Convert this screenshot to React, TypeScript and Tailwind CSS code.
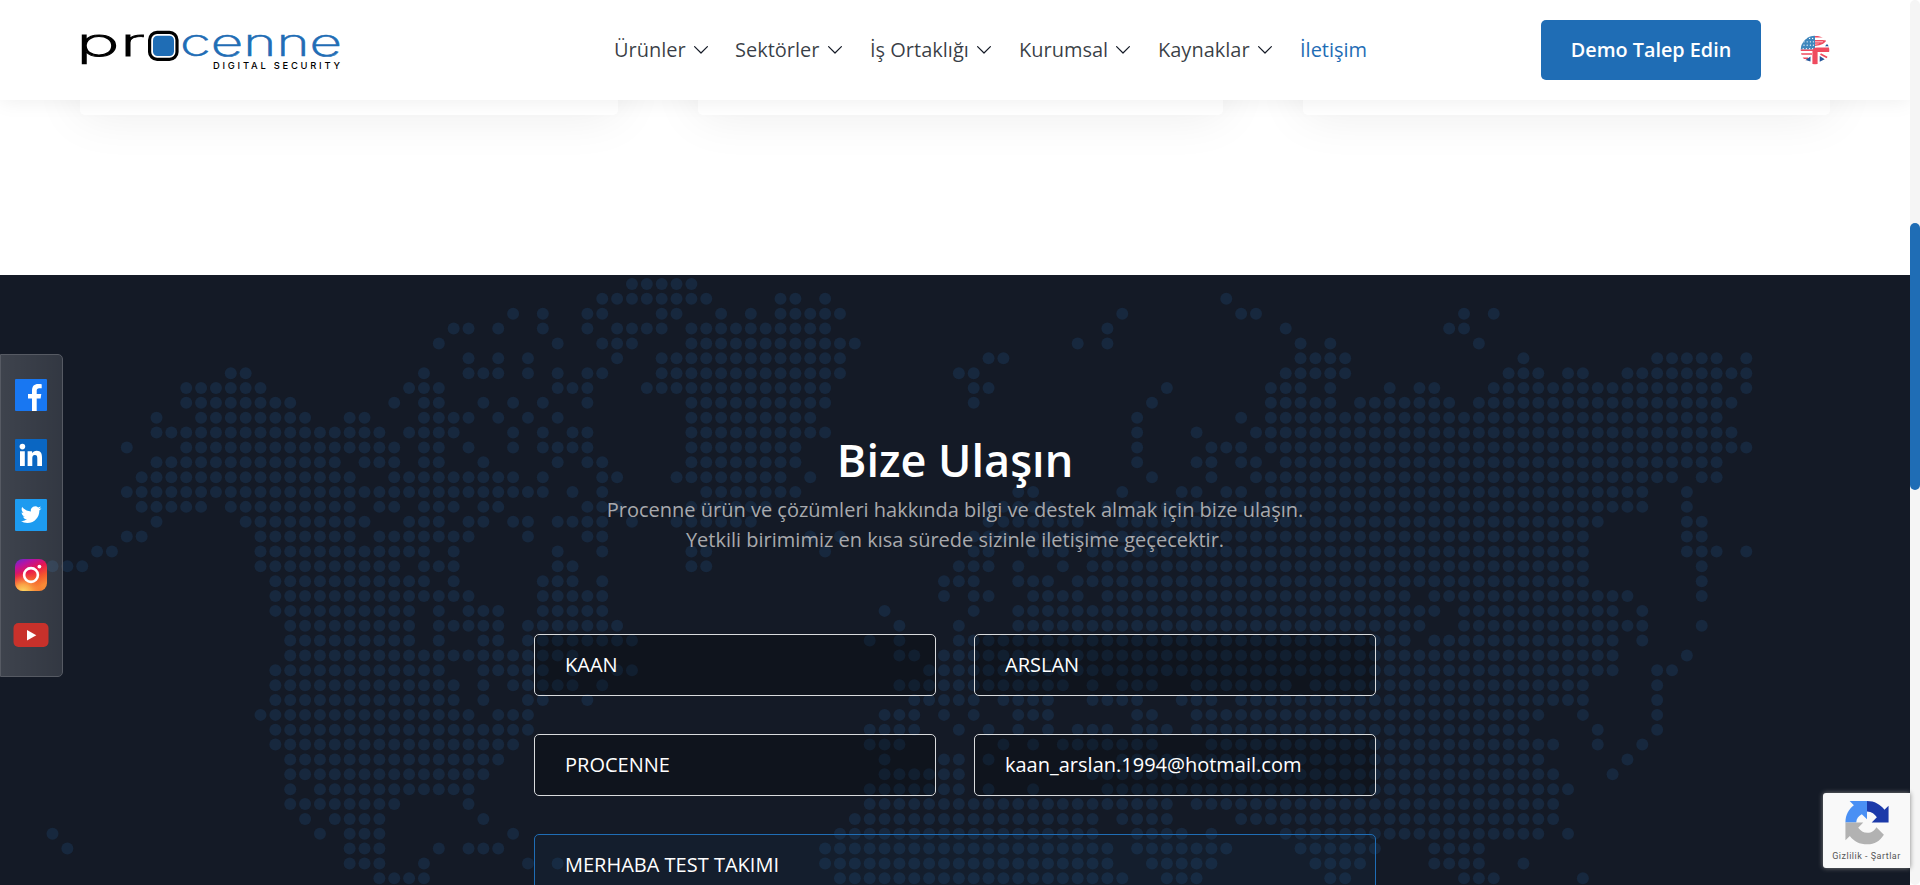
import React from "react";

type Range = [number, number?];

const COLUMN_PITCH = 14.858;
const DOT_RADIUS = 6;

const MAP_ROWS: Range[][] = [
  [[39, 43]],
  [[37, 44], [49, 50], [52], [79]],
  [[31], [33], [36, 37], [41, 42], [45], [47], [49, 53], [72], [80, 81], [95], [97]],
  [[27, 28], [30], [33], [36], [38, 41], [43, 52], [71], [83], [94, 95]],
  [[26], [34], [37, 39], [43, 54], [69], [71], [84], [86], [96]],
  [[28], [30], [32], [38], [41, 53], [63, 64], [84, 87], [99], [108, 112], [114]],
  [[12, 13], [25], [28, 30], [32], [34], [36, 37], [41, 53], [61, 62], [83, 87], [98, 100], [102, 103], [106, 114]],
  [[9, 14], [24, 26], [34, 36], [40, 52], [62, 63], [75], [82, 84], [86], [90], [92, 93], [97, 112], [114]],
  [[9, 16], [23], [25, 26], [29], [31], [33], [36], [43, 52], [62], [74], [82, 86], [88, 94], [96, 113]],
  [[7], [10, 17], [20, 21], [25, 28], [30], [32], [34], [43, 51], [73], [80], [82, 112]],
  [[7, 22], [24, 27], [31], [33], [35, 36], [43, 52], [73], [77], [81, 113]],
  [[5], [9, 23], [25, 26], [28], [31], [33, 36], [43, 50], [73], [78, 80], [82, 114]],
  [[7, 19], [21, 23], [25, 26], [29], [34], [36, 37], [43, 50], [73], [77, 78], [80, 81], [83, 112]],
  [[6, 20], [23, 31], [33], [37, 38], [42, 49], [51], [74], [78], [81, 109], [111, 112]],
  [[5, 33], [35], [37], [44, 50], [65, 66], [72], [76, 77], [79, 80], [82, 107], [110]],
  [[6, 10], [12, 20], [22, 23], [25, 27], [29, 30], [36, 38], [43, 48], [63, 67], [71], [73, 107], [110]],
  [[7], [13, 21], [24, 26], [28, 29], [31, 32], [34, 37], [39], [42, 47], [63, 69], [72, 104], [110, 111]],
  [[5, 6], [14, 20], [22, 28], [32], [36, 37], [51], [53], [62, 64], [66, 103], [110, 111]],
  [[3, 4], [14, 25], [27], [34], [37], [43, 44], [52], [62, 63], [66, 68], [70, 103], [110, 112], [114]],
  [[0, 2], [14, 23], [25, 27], [34, 35], [43, 44], [61, 63], [65], [68], [70, 103], [111]],
  [[15, 25], [27], [33, 35], [37], [60, 62], [65, 67], [69, 103], [111]],
  [[15, 28], [33, 37], [60], [62, 63], [66, 69], [71, 91], [93, 106], [111]],
  [[15, 24], [26], [28, 30], [33, 37], [56], [62], [65, 93], [95, 105], [107]],
  [[16, 24], [26, 30], [32, 38], [57], [61], [65, 92], [95, 107], [111]],
  [[16, 24], [26], [29, 30], [32, 39], [55], [57], [61, 91], [93, 105], [107]],
  [[16, 35], [57, 58], [60, 105], [110]],
  [[15, 26], [29, 33], [35], [38, 39], [59, 105], [108, 109]],
  [[15, 27], [29], [31, 35], [37], [57, 68], [70], [72, 74], [77, 83], [85, 103], [108]],
  [[15, 27], [29], [32, 33], [36], [58, 62], [64, 67], [70, 73], [76, 78], [80, 103], [108]],
  [[14, 28], [30, 32], [56, 58], [60], [62], [65, 67], [73, 74], [77, 100], [103], [108]],
  [[15, 32], [55, 58], [61], [63], [65], [67], [69, 71], [73, 75], [77, 99], [104], [108]],
  [[15, 31], [55, 57], [64], [66], [68, 74], [78, 101], [104], [107]],
  [[16, 30], [56], [60, 61], [63], [72, 100], [106]],
  [[16, 29], [56, 61], [70, 101], [105]],
  [[16], [18, 28], [55, 61], [63], [66], [71, 102]],
  [[16, 23], [28], [55, 75], [77, 101]],
  [[17], [19, 22], [29], [54, 70], [72, 75], [80, 101]],
  [[0], [18], [20, 22], [31], [53, 70], [73, 76], [78], [83, 100], [102]],
  [[1], [20, 22], [26], [28, 30], [52, 71], [73, 79], [84, 89], [93, 96]],
  [[20, 22], [25], [32], [34], [52, 71], [74, 78], [85, 88], [93, 96], [99]],
  [[22, 25], [53, 72], [75, 77], [86, 87], [95, 97], [103]],
];

function WorldMap() {
  const dots: React.ReactNode[] = [];
  MAP_ROWS.forEach((ranges, row) => {
    ranges.forEach(([start, end = start]) => {
      for (let col = start; col <= end; col += 1) {
        dots.push(
          <circle
            key={`${row}-${col}`}
            cx={52.5 + col * COLUMN_PITCH}
            cy={9 + row * COLUMN_PITCH}
            r={DOT_RADIUS}
          />,
        );
      }
    });
  });
  return (
    <svg width="1910" height="610" className="absolute left-0 top-0 fill-[#17283e]" aria-hidden="true">
      {dots}
    </svg>
  );
}

function Logo() {
  return (
    <svg width="264" height="44" viewBox="78 28 264 44" className="block overflow-visible" role="img" aria-label="Procenne">
      <g fontFamily="Inter, sans-serif" fontSize="38">
        <text
          x="76"
          y="56"
          fill="#000"
          stroke="#000"
          strokeWidth="0.9"
          fontWeight="200"
          textLength="69"
          lengthAdjust="spacingAndGlyphs"
        >
          pr
        </text>
        <text
          x="180"
          y="55.5"
          fill="#1f6db5"
          stroke="#1f6db5"
          strokeWidth="0.6"
          fontWeight="200"
          textLength="162"
          lengthAdjust="spacingAndGlyphs"
        >
          cenne
        </text>
      </g>
      <rect x="149.6" y="32.4" width="27.4" height="27" rx="7.5" fill="#fff" stroke="#000" strokeWidth="3.2" />
      <rect x="153" y="35.7" width="21" height="20.4" rx="4.5" fill="#1f6db5" />
      <text
        x="213"
        y="69"
        fontFamily="Inter, sans-serif"
        fontSize="9.4"
        fontWeight="500"
        textLength="127"
        lengthAdjust="spacing"
      >
        DIGITAL SECURITY
      </text>
    </svg>
  );
}

function Chevron() {
  return (
    <svg width="16" height="16" viewBox="0 0 16 16" className="fill-none stroke-[#141a26] stroke-[1.2]">
      <path d="M1.6 4.6 8 11l6.4-6.4" strokeLinecap="round" strokeLinejoin="round" />
    </svg>
  );
}

function Flag() {
  return (
    <svg width="30" height="30" viewBox="0 0 30 30">
      <defs>
        <clipPath id="flag-disc">
          <circle cx="15" cy="15" r="14.3" />
        </clipPath>
      </defs>
      <g clipPath="url(#flag-disc)">
        <rect width="30" height="30" fill="#fff" />
        <rect width="15" height="14.5" fill="#3f87bd" />
        <path
          d="M15 1.7h14M15 5.8h8q2 .4 0 2.2h-8M26 4.5q-2 5-11 5.8"
          fill="none"
          stroke="#ef4b5f"
          strokeWidth="1.6"
        />
        <path d="M0 15.3h13M0 19h12M0 23.3h8M3 26.5h3" fill="none" stroke="#ef4b5f" strokeWidth="1.6" />
        <path d="M30 12.5v4.6H17.6V30h-5.2V17q0-4.5 4.5-4.5z" fill="#ef4b5f" />
        <path d="M27 9l2 2.3h-4zM10.5 21.5v5L5.5 25zM19.7 21v5.8l5-2.5z" fill="#27579b" />
        <path d="M20.5 19l8 4.2" stroke="#ef4b5f" strokeWidth="1.8" />
        <g fill="#fff">
          {[3.4, 6.8, 10.2, 13.6].map((y) =>
            [4, 7.2, 10.4, 13.4].map((x) => (
              <circle key={`${x}-${y}`} cx={y % 2 > 1 ? x - 0.8 : x} cy={y} r="0.65" />
            )),
          )}
        </g>
      </g>
    </svg>
  );
}

const NAV = [
  { label: "Ürünler", width: "w-[121px]" },
  { label: "Sektörler", width: "w-[135px]" },
  { label: "İş Ortaklığı", width: "w-[149px]" },
  { label: "Kurumsal", width: "w-[139px]" },
  { label: "Kaynaklar", width: "w-[142px]" },
];

function Header() {
  return (
    <header className="relative z-20 flex h-[100px] w-full shrink-0 items-center bg-white pl-[78px] pr-20 shadow-[0_0_20px_rgba(0,0,0,0.08)]">
      <div className="w-[536px] shrink-0">
        <Logo />
      </div>
      <nav className="flex flex-1 text-[20px] text-[#141a26]/85">
        {NAV.map((item) => (
          <a key={item.label} className={`flex shrink-0 items-center gap-[7px] whitespace-nowrap ${item.width}`}>
            {item.label}
            <Chevron />
          </a>
        ))}
        <a className="text-[#1f6db5]">İletişim</a>
      </nav>
      <a className="flex h-[60px] w-[220px] items-center justify-center rounded-[5px] bg-[#1f6db5] text-[19.8px] font-semibold text-white">
        Demo Talep Edin
      </a>
      <div className="ml-[39px] w-[30px]">
        <Flag />
      </div>
    </header>
  );
}

function SocialBar() {
  return (
    <aside className="absolute left-0 top-[354px] z-10 flex h-[323px] w-[63px] flex-col items-center gap-7 rounded-r-[5px] border border-[#565a63] bg-linear-to-r from-white/18 to-white/13 pr-[2px] pt-[24px]">
      <svg width="32" height="32" viewBox="0 0 32 32">
        <rect width="32" height="32" rx="1" fill="#1877f2" />
        <path
          d="M17 32V19.4h-4V15h4v-3.6c0-4.2 2.3-6.4 6.1-6.4 1.5 0 3.6.2 3.6.2v4h-2.4c-2 0-2.6 1.2-2.6 2.5V15h4.6l-.7 4.4h-3.9V32z"
          fill="#fff"
        />
      </svg>
      <svg width="32" height="32" viewBox="0 0 32 32">
        <rect width="32" height="32" rx="1" fill="#0a66c2" />
        <circle cx="7.4" cy="7.6" r="2.8" fill="#fff" />
        <path
          d="M5 12.2h4.8V27H5zM12.6 12.2h4.5v2c.8-1.4 2.4-2.4 4.6-2.4 4.4 0 5.3 2.9 5.3 6.9V27h-4.7v-7.4c0-1.9-.2-3.6-2.4-3.6s-2.6 1.6-2.6 3.6V27h-4.7z"
          fill="#fff"
        />
      </svg>
      <svg width="32" height="32" viewBox="0 0 32 32">
        <rect width="32" height="32" rx="1" fill="#1d9bf0" />
        <path
          transform="translate(5.8 5.3) scale(0.86)"
          d="M23.954 4.569a10 10 0 0 1-2.825.775 4.958 4.958 0 0 0 2.163-2.723 9.99 9.99 0 0 1-3.127 1.184 4.92 4.92 0 0 0-8.384 4.482C7.691 8.094 4.066 6.13 1.64 3.161a4.822 4.822 0 0 0-.666 2.475c0 1.71.87 3.213 2.188 4.096a4.904 4.904 0 0 1-2.228-.616v.061a4.923 4.923 0 0 0 3.946 4.827 4.996 4.996 0 0 1-2.212.085 4.937 4.937 0 0 0 4.604 3.417 9.868 9.868 0 0 1-6.102 2.105c-.39 0-.779-.023-1.17-.067a13.995 13.995 0 0 0 7.557 2.209c9.054 0 13.999-7.496 13.999-13.986 0-.209 0-.42-.015-.63a9.936 9.936 0 0 0 2.46-2.548z"
          fill="#fff"
        />
      </svg>
      <svg width="32" height="32" viewBox="0 0 32 32">
        <defs>
          <linearGradient id="insta-base" x1="0" y1="0" x2="0.45" y2="1">
            <stop offset="0" stopColor="#5b2fd0" />
            <stop offset="0.22" stopColor="#b513a5" />
            <stop offset="0.48" stopColor="#e8164f" />
            <stop offset="0.75" stopColor="#f5582c" />
            <stop offset="1" stopColor="#f98a35" />
          </linearGradient>
          <radialGradient id="insta-glow" cx="0.25" cy="1.05" r="0.65">
            <stop offset="0" stopColor="#fbe068" />
            <stop offset="0.4" stopColor="#fbb04a" stopOpacity="0.85" />
            <stop offset="1" stopColor="#f5582c" stopOpacity="0" />
          </radialGradient>
        </defs>
        <rect width="32" height="32" rx="8" fill="url(#insta-base)" />
        <rect width="32" height="32" rx="8" fill="url(#insta-glow)" />
        <circle cx="16" cy="16" r="6.9" fill="none" stroke="#fff" strokeWidth="2.6" />
        <circle cx="24.4" cy="7.6" r="1.9" fill="#fff" />
      </svg>
      <svg width="36" height="32" viewBox="0 0 36 32">
        <rect x="0.5" y="4" width="35" height="24" rx="5" fill="#c8312b" />
        <path d="M14 11v10.4l9.3-5.2z" fill="#fff" />
      </svg>
    </aside>
  );
}

function Recaptcha() {
  return (
    <div className="absolute left-[1823px] top-[793px] z-10 flex h-[75px] w-[87px] flex-col items-center rounded-l-[3px] bg-[#f9f9f9] pt-[7px] shadow-[0_0_5px_gray]">
      <svg width="48" height="48" viewBox="0 0 48 48">
        <path d="M24 1c8 0 14.5 3.7 18.6 9.3L47 6v18H29l5.5-5.5C32.5 15 29 12.4 24 12.2z" fill="#1c3aa9" />
        <path d="M24 1v19.5l-5.5-5.3C15 16.8 12.7 20 12.5 24H1C1 16 4.5 9.8 10 5.7L5.5 1z" fill="#4a90f4" />
        <path
          d="M1 24h19l-5.4 5.7C17.3 33 20 35 24.5 35c4.6 0 7.5-2.5 9.5-6l8 8C37.5 44 32 47.3 24.5 47.3 16 47.3 10 44 5.7 38.3L1 43z"
          fill="#b2b2b2"
        />
      </svg>
      <span className="whitespace-nowrap font-[Roboto,sans-serif] text-[9px] font-normal leading-[23px] tracking-[0.5px] text-[#555]">
        Gizlilik - Şartlar
      </span>
    </div>
  );
}

function Field({ value }: { value: string }) {
  return (
    <input
      readOnly
      value={value}
      className="h-[62px] w-full rounded-[5px] border border-[#d9dbdd] bg-black/22 px-[30px] pb-[2px] text-[20px] text-white outline-none"
    />
  );
}

function ContactSection() {
  return (
    <section className="relative h-[610px] w-full shrink-0 overflow-hidden bg-[#141a26]">
      <WorldMap />
      <div className="relative mx-auto flex w-[842px] flex-col pt-[155px]">
        <h2 className="text-center text-[45px] font-semibold leading-[60px] text-white">Bize Ulaşın</h2>
        <p className="mt-[5px] whitespace-nowrap text-center text-[20px] leading-[30px] text-[#a8a9ad]">
          Procenne ürün ve çözümleri hakkında bilgi ve destek almak için bize ulaşın.
          <br />
          Yetkili birimimiz en kısa sürede sizinle iletişime geçecektir.
        </p>
        <form className="mt-[79px] grid grid-cols-2 gap-x-[38px] gap-y-[38px]">
          <Field value="KAAN" />
          <Field value="ARSLAN" />
          <Field value="PROCENNE" />
          <Field value="kaan_arslan.1994@hotmail.com" />
          <textarea
            readOnly
            value="MERHABA TEST TAKIMI"
            className="col-span-2 h-[160px] resize-none rounded-[5px] border border-[#1f6db5] bg-[#1f6db5]/5 px-[30px] py-[16px] text-[20px] leading-[28px] text-white outline-none"
          />
        </form>
      </div>
    </section>
  );
}

export default function App() {
  return (
    <div className="relative flex h-[885px] w-[1920px] overflow-hidden bg-white font-['Open_Sans',sans-serif]">
      <div className="flex w-[1910px] flex-col overflow-hidden">
        <Header />
        <div className="flex h-[175px] w-full shrink-0 pl-20">
          <div className="-mt-[85px] h-[100px] w-[538px] rounded-b-[5px] bg-white shadow-[0_0_50px_rgba(0,0,0,0.08)]" />
          <div className="-mt-[85px] ml-20 h-[100px] w-[525px] rounded-b-[5px] bg-white shadow-[0_0_50px_rgba(0,0,0,0.08)]" />
          <div className="-mt-[85px] ml-20 h-[100px] w-[527px] rounded-b-[5px] bg-white shadow-[0_0_50px_rgba(0,0,0,0.08)]" />
        </div>
        <ContactSection />
      </div>
      <div className="w-[10px] rounded-[5px] bg-[#f5f5f5] pt-[223px]">
        <div className="h-[267px] rounded-[5px] bg-[#1f6db5]" />
      </div>
      <SocialBar />
      <Recaptcha />
    </div>
  );
}
